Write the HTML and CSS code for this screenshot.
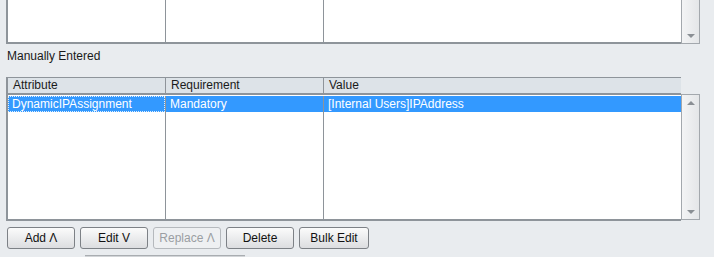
FILE: index.html
```html
<!DOCTYPE html>
<html lang="en">
<head>
  <meta charset="UTF-8">
  <title>Attributes</title>
  <link rel="stylesheet" href="styles.css">
</head>
<body>
  <div class="panel">
    <div class="table-box top-box">
      <div class="grid">
        <div class="col c1"></div>
        <div class="col c2"></div>
        <div class="col c3"></div>
      </div>
      <div class="scrollbar">
        <span class="arrow down"></span>
      </div>
    </div>

    <div class="section-label">Manually Entered</div>

    <div class="table-box main-box">
      <div class="grid">
        <div class="head">
          <div class="hcell c1">Attribute</div>
          <div class="hcell c2">Requirement</div>
          <div class="hcell c3">Value</div>
        </div>
        <div class="body">
          <div class="col c1"><div class="cell sel focus">DynamicIPAssignment</div></div>
          <div class="col c2"><div class="cell sel">Mandatory</div></div>
          <div class="col c3"><div class="cell sel">[Internal Users]IPAddress</div></div>
        </div>
      </div>
      <div class="scrollbar tall">
        <span class="arrow up"></span>
        <span class="arrow down"></span>
      </div>
    </div>

    <div class="buttons">
      <button>Add &Lambda;</button>
      <button>Edit V</button>
      <button disabled>Replace &Lambda;</button>
      <button>Delete</button>
      <button class="wide">Bulk Edit</button>
    </div>
    <div class="stub"></div>
  </div>
</body>
</html>
```

FILE: styles.css
```css
body {
  margin: 0;
  background: #e9ecef;
  font-family: Tahoma, 'Liberation Sans', Arial, sans-serif;
  font-size: 12px;
  color: #1a1a1a;
  overflow: hidden;
}

.panel {
  padding-left: 6px;
}

.table-box {
  display: flex;
  align-items: flex-start;
}

.grid {
  width: 673px;
  background: #ffffff;
  border-left: 2px solid #8e949a;
  border-bottom: 2px solid #8e949a;
}

.top-box .grid {
  display: flex;
  height: 42px;
}

.col {
  height: 100%;
}

.c1 { width: 157px; border-right: 1px solid #8e949a; }
.c2 { width: 157px; border-right: 1px solid #8e949a; }
.c3 { flex: 1; }

.scrollbar {
  width: 19px;
  background: linear-gradient(to right, #f3f4f5, #e4e6e8);
  border: 1px solid #a3a8ad;
  border-top: none;
  display: flex;
  flex-direction: column;
  justify-content: space-between;
  align-items: center;
  box-sizing: border-box;
}

.top-box .scrollbar {
  height: 44px;
  justify-content: flex-end;
}

.arrow {
  width: 0;
  height: 0;
  border-left: 4px solid transparent;
  border-right: 4px solid transparent;
  margin: 6px 0 5px;
}

.arrow.up { border-bottom: 4px solid #8a8f94; }
.arrow.down { border-top: 4px solid #8a8f94; }

.section-label {
  height: 33px;
  line-height: 25px;
  padding-left: 1px;
}

.main-box .grid {
  border-top: 1px solid #8e949a;
  width: 673px;
}

.head {
  display: flex;
  height: 15px;
  background: #dde3e8;
  border-bottom: 2px solid #8e949a;
}

.hcell {
  line-height: 15px;
  padding-left: 5px;
}

.head .c1,
.head .c2 {
  width: 152px;
}

.head .c3 { flex: 1; }

.body {
  display: flex;
  height: 123px;
  padding-top: 1px;
}

.cell {
  height: 16px;
  line-height: 16px;
  padding-left: 4px;
  white-space: nowrap;
}

.sel {
  background: #3399ff;
  color: #ffffff;
}

.focus {
  outline: 1px dotted #dfefff;
  outline-offset: -1px;
}

.scrollbar.tall {
  margin-top: 17px;
  height: 126px;
  border-top: 1px solid #a3a8ad;
}

.buttons {
  display: flex;
  gap: 5px;
  margin-top: 6px;
  padding-left: 1px;
}

button {
  width: 68px;
  height: 22px;
  padding: 0;
  font-family: inherit;
  font-size: 12px;
  color: #111111;
  background: linear-gradient(#fbfbfb, #dcdde0);
  border: 1px solid #7d8186;
  border-radius: 3px;
}

button:disabled {
  color: #9a9ea2;
  background: #eef0f2;
  border-color: #b5b9bd;
}

button.wide {
  width: 70px;
}

.stub {
  margin: 6px 0 0 79px;
  width: 160px;
  height: 3px;
  background: #d2d5d8;
  border-top: 1px solid #a9adb1;
}
```
